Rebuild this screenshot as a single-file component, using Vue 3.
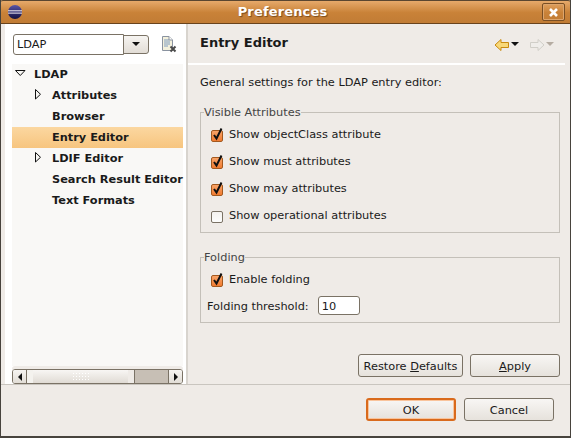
<script setup>
import { ref } from 'vue'

const filter = ref('LDAP')
const threshold = ref('10')

const treeItems = [
  { label: 'LDAP', level: 0, arrow: 'open' },
  { label: 'Attributes', level: 1, arrow: 'closed' },
  { label: 'Browser', level: 1 },
  { label: 'Entry Editor', level: 1, selected: true },
  { label: 'LDIF Editor', level: 1, arrow: 'closed' },
  { label: 'Search Result Editor', level: 1 },
  { label: 'Text Formats', level: 1 }
]

const visibleAttrs = ref([
  { label: 'Show objectClass attribute', checked: true },
  { label: 'Show must attributes', checked: true },
  { label: 'Show may attributes', checked: true },
  { label: 'Show operational attributes', checked: false }
])

const folding = ref(true)
</script>

<template>
  <div class="window">
    <header class="titlebar">
      <svg class="app-icon" width="16" height="16" viewBox="0 0 16 16">
        <defs>
          <linearGradient id="eclipse" x1="0" y1="0" x2="0" y2="1">
            <stop offset="0" stop-color="#5a56a8" />
            <stop offset="0.55" stop-color="#2c2a6e" />
            <stop offset="1" stop-color="#15133f" />
          </linearGradient>
        </defs>
        <circle cx="8" cy="8" r="7" fill="url(#eclipse)" />
        <rect x="1" y="6.3" width="14" height="1" fill="#f2eef0" />
        <rect x="1" y="8.6" width="14" height="1" fill="#f2eef0" />
      </svg>
      <span class="title">Preferences</span>
      <button class="close">
        <svg width="11" height="11" viewBox="0 0 11 11">
          <path d="M2 2 L9 9 M9 2 L2 9" stroke="#fff" stroke-width="2.6" fill="none" />
        </svg>
      </button>
    </header>

    <div class="main">
      <aside class="left">
        <div class="filter-row">
          <div class="combo">
            <input v-model="filter" class="combo-input" />
            <span class="combo-btn"><i class="down-arrow"></i></span>
          </div>
          <svg class="clear-icon" width="16" height="17" viewBox="0 0 16 17">
            <path d="M1.5 .5 H8 L11.5 4 V14.5 H1.5 Z" fill="#f3f0dc" stroke="#8a93a0" />
            <path d="M3 4 H8 M3 6 H9 M3 8 H9 M3 10 H7" stroke="#7f9cc0" />
            <path d="M8 .5 V4 H11.5" fill="#fff" stroke="#8a93a0" />
            <path d="M9.5 10.5 L14.5 15.5 M14.5 10.5 L9.5 15.5" stroke="#4a4a4a" stroke-width="2" />
          </svg>
        </div>
        <ul class="tree">
          <li
            v-for="item in treeItems"
            :key="item.label"
            class="tree-row"
            :class="{ selected: item.selected, nested: item.level === 1 }"
          >
            <svg v-if="item.arrow === 'open'" class="twisty" width="11" height="11" viewBox="0 0 11 11">
              <path d="M.5 2.5 H10 L5.25 7.5 Z" fill="#f7f6f3" stroke="#111" />
            </svg>
            <svg v-else-if="item.arrow === 'closed'" class="twisty" width="11" height="11" viewBox="0 0 11 11">
              <path d="M2.5 .5 V10 L7.5 5.25 Z" fill="#f7f6f3" stroke="#111" />
            </svg>
            <span v-else class="twisty"></span>
            <span>{{ item.label }}</span>
          </li>
        </ul>
        <div class="hscroll">
          <span class="step"><i class="tri-left"></i></span>
          <div class="track">
            <div class="thumb"><span class="grip"></span></div>
            <div class="trough"></div>
          </div>
          <span class="step"><i class="tri-right"></i></span>
        </div>
      </aside>

      <section class="right">
        <div class="page-head">
          <h2>Entry Editor</h2>
          <div class="nav">
            <svg width="16" height="14" viewBox="0 0 16 14">
              <path d="M1 7 L7 1.5 V4.5 H14.5 V9.5 H7 V12.5 Z" fill="#f8d878" stroke="#c88a10" />
            </svg>
            <i class="nav-arrow"></i>
            <svg class="fwd" width="16" height="14" viewBox="0 0 16 14">
              <path d="M15 7 L9 1.5 V4.5 H1.5 V9.5 H9 V12.5 Z" fill="#efedea" stroke="#d0cec8" />
            </svg>
            <i class="nav-arrow off"></i>
          </div>
        </div>

        <div class="page-body">
          <p class="intro">General settings for the LDAP entry editor:</p>

          <fieldset class="group visible">
            <legend>Visible Attributes</legend>
            <label v-for="attr in visibleAttrs" :key="attr.label" class="check">
              <span class="box" :class="{ on: attr.checked }">
                <svg v-if="attr.checked" width="13" height="14" viewBox="0 0 13 14">
                  <path d="M3 8 L5.5 11.5 L10.5 1.5" stroke="#111" stroke-width="2" fill="none" />
                </svg>
              </span>
              {{ attr.label }}
            </label>
          </fieldset>

          <fieldset class="group folding">
            <legend>Folding</legend>
            <label class="check">
              <span class="box" :class="{ on: folding }">
                <svg v-if="folding" width="13" height="14" viewBox="0 0 13 14">
                  <path d="M3 8 L5.5 11.5 L10.5 1.5" stroke="#111" stroke-width="2" fill="none" />
                </svg>
              </span>
              Enable folding
            </label>
            <div class="threshold">
              <span>Folding threshold:</span>
              <input v-model="threshold" class="num-input" />
            </div>
          </fieldset>

          <div class="page-actions">
            <button class="btn restore">Restore <u>D</u>efaults</button>
            <button class="btn apply"><u>A</u>pply</button>
          </div>
        </div>
      </section>
    </div>

    <footer class="footer">
      <button class="btn ok">OK</button>
      <button class="btn cancel">Cancel</button>
    </footer>
  </div>
</template>

<style>
html, body {
  margin: 0;
  background: #efebe7;
}
</style>

<style scoped>
* {
  box-sizing: border-box;
}

.window {
  width: 571px;
  height: 438px;
  display: flex;
  flex-direction: column;
  background: #efebe7;
  border-left: 1px solid #47433d;
  border-right: 1px solid #47433d;
  border-bottom: 2px solid #47433d;
  font-family: "DejaVu Sans", sans-serif;
  font-size: 11.33px;
  color: #1a1a1a;
  overflow: hidden;
}

.titlebar {
  height: 24px;
  flex: none;
  display: flex;
  align-items: center;
  justify-content: center;
  position: relative;
  background: linear-gradient(#e9ad6f, #c98238 55%, #c17c35);
  border-bottom: 1px solid #69431c;
  border-radius: 3px 3px 0 0;
  box-shadow: inset 0 1px 0 #5a4630;
  margin: 0 -1px;
}

.app-icon {
  position: absolute;
  left: 7px;
  top: 4px;
}

.title {
  color: #fff;
  font-size: 13px;
  font-weight: bold;
  letter-spacing: 0.15px;
  margin-right: 6px;
  text-shadow: 1px 1px 1px #7a4a1c;
}

.close {
  position: absolute;
  right: 6px;
  top: 3px;
  width: 23px;
  height: 18px;
  padding: 0;
  display: flex;
  align-items: center;
  justify-content: center;
  background: transparent;
  border: 1px solid #7a4f24;
  border-radius: 2px;
  box-shadow: inset 0 0 0 1px #dda56c;
}

.main {
  flex: 1;
  display: flex;
  min-height: 0;
  border-bottom: 1px solid #c9c5bf;
}

.left {
  width: 182px;
  margin-left: 4px;
  display: flex;
  flex-direction: column;
  padding: 0 3px 0 7px;
  border-right: 1px solid #d8d4ce;
  background: #fff;
}

.filter-row {
  height: 40px;
  flex: none;
  display: flex;
  align-items: center;
}

.combo {
  width: 136px;
  height: 21px;
  margin-left: 1px;
  display: flex;
}

.combo-input {
  flex: 1;
  width: 100%;
  min-width: 0;
  height: 21px;
  border: 1px solid #7a7265;
  border-radius: 3px 0 0 3px;
  padding: 0 3px;
  font: inherit;
  color: #1a1a1a;
  background: #fff;
  outline: none;
}

.combo-btn {
  width: 26px;
  height: 19px;
  flex: none;
  display: flex;
  align-items: center;
  justify-content: center;
  margin-left: -1px;
  margin-top: 1px;
  border: 1px solid #7a7265;
  border-radius: 0 3px 3px 0;
  background: linear-gradient(#f6f4f1, #e2ddd6);
}

.down-arrow {
  border-left: 4px solid transparent;
  border-right: 4px solid transparent;
  border-top: 4px solid #111;
}

.clear-icon {
  margin-left: 12px;
}

.tree {
  flex: 1;
  list-style: none;
  margin: 0;
  padding: 0;
  background: #f9f8f6;
}

.tree-row {
  height: 21px;
  display: flex;
  align-items: center;
  font-weight: bold;
  padding-left: 3px;
  padding-bottom: 2px;
}

.tree-row.nested {
  padding-left: 21px;
}

.tree-row.selected {
  background: linear-gradient(#fbd7a0, #f7c57f);
}

.twisty {
  width: 11px;
  flex: none;
  margin-right: 8px;
}

.hscroll {
  height: 15px;
  flex: none;
  display: flex;
  margin-top: 3px;
  border: 1px solid #7a7265;
  border-radius: 3px;
  overflow: hidden;
  box-shadow: 0 -3px 0 #efebe7;
}

.step {
  width: 13px;
  flex: none;
  display: flex;
  align-items: center;
  justify-content: center;
  background: linear-gradient(#f6f4f1, #e2ddd6);
}

.tri-left {
  border-top: 4px solid transparent;
  border-bottom: 4px solid transparent;
  border-right: 4px solid #111;
}

.tri-right {
  border-top: 4px solid transparent;
  border-bottom: 4px solid transparent;
  border-left: 4px solid #111;
}

.track {
  flex: 1;
  display: flex;
  border-left: 1px solid #7a7265;
  border-right: 1px solid #7a7265;
}

.thumb {
  width: 107px;
  display: flex;
  align-items: center;
  justify-content: center;
  background: linear-gradient(#f8f6f4, #e0dbd4);
  border-left: 6px solid #f4f2ee;
  border-right: 6px solid #efebe7;
}

.grip {
  width: 18px;
  height: 9px;
  background-image: radial-gradient(#fff 1px, transparent 1px);
  background-size: 3px 3px;
}

.trough {
  flex: 1;
  background: #c7bfb5;
  border-left: 1px solid #7a7265;
}

.right {
  flex: 1;
  display: flex;
  flex-direction: column;
  min-width: 0;
  border-left: 1px solid #d8d4ce;
}

.page-head {
  height: 41px;
  flex: none;
  display: flex;
  align-items: center;
  justify-content: space-between;
  padding: 0 11px 2px 12px;
  margin-right: 5px;
  border-bottom: 2px solid;
  border-image: linear-gradient(#bdb9b2 50%, #fff 50%) 1;
}

.page-head h2 {
  margin: 0;
  font-size: 13px;
  font-weight: bold;
}

.nav {
  display: flex;
  align-items: center;
  margin-top: 4px;
}

.nav-arrow {
  margin: 0 0 2px 1px;
  border-left: 4px solid transparent;
  border-right: 4px solid transparent;
  border-top: 4px solid #111;
}

.nav-arrow.off {
  border-top-color: #b5aca2;
}

.fwd {
  margin-left: 10px;
}

.page-body {
  flex: 1;
  display: flex;
  flex-direction: column;
  padding: 0 10px 0 12px;
}

.intro {
  margin: 9px 0 0;
  height: 16px;
  line-height: 16px;
}

.group {
  margin: 0;
  min-width: 0;
  border: 1px solid #c4c0b9;
  padding: 1px 6px 0;
  color: #1a1a1a;
}

.group legend {
  padding: 0;
  margin-left: -3px;
  font-size: inherit;
  color: #444;
  line-height: 14px;
}

.group.visible {
  margin-top: 15px;
  height: 128px;
}

.group.folding {
  margin-top: 17px;
  height: 73px;
}

.check {
  height: 27px;
  display: flex;
  align-items: center;
  padding-left: 4px;
}

.box {
  width: 12px;
  height: 12px;
  flex: none;
  margin-right: 6px;
  margin-top: 4px;
  position: relative;
  border: 1px solid #7a7265;
  border-radius: 2px;
  background: linear-gradient(#f4f2ef, #fdfdfc);
}

.box.on {
  background: linear-gradient(#f9a468, #f07b30);
  border-color: #a3591f;
}

.box svg {
  position: absolute;
  left: -1px;
  top: -4px;
}

.threshold {
  display: flex;
  align-items: center;
  gap: 9px;
  height: 27px;
}

.num-input {
  width: 42px;
  height: 19px;
  border: 1px solid #7a7265;
  border-radius: 3px;
  padding: 0 3px;
  font: inherit;
  color: #1a1a1a;
  background: #fff;
  outline: none;
}

.page-actions {
  margin-top: auto;
  margin-bottom: 7px;
  display: flex;
  justify-content: flex-end;
  gap: 7px;
}

.btn {
  height: 23px;
  padding: 0;
  font: inherit;
  color: #1a1a1a;
  border: 1px solid #7a7265;
  border-radius: 3px;
  background: linear-gradient(#f8f6f4, #e6e2dc);
}

.btn u {
  text-underline-offset: 1px;
}

.restore {
  width: 105px;
}

.apply {
  width: 90px;
}

.footer {
  height: 51px;
  flex: none;
  display: flex;
  justify-content: flex-end;
  gap: 8px;
  padding: 13px 16px 0 0;
}

.ok,
.cancel {
  width: 90px;
}

.ok {
  border: 2px solid #d96a1c;
  box-shadow: inset 0 0 0 1px #f9c49c;
}
</style>
